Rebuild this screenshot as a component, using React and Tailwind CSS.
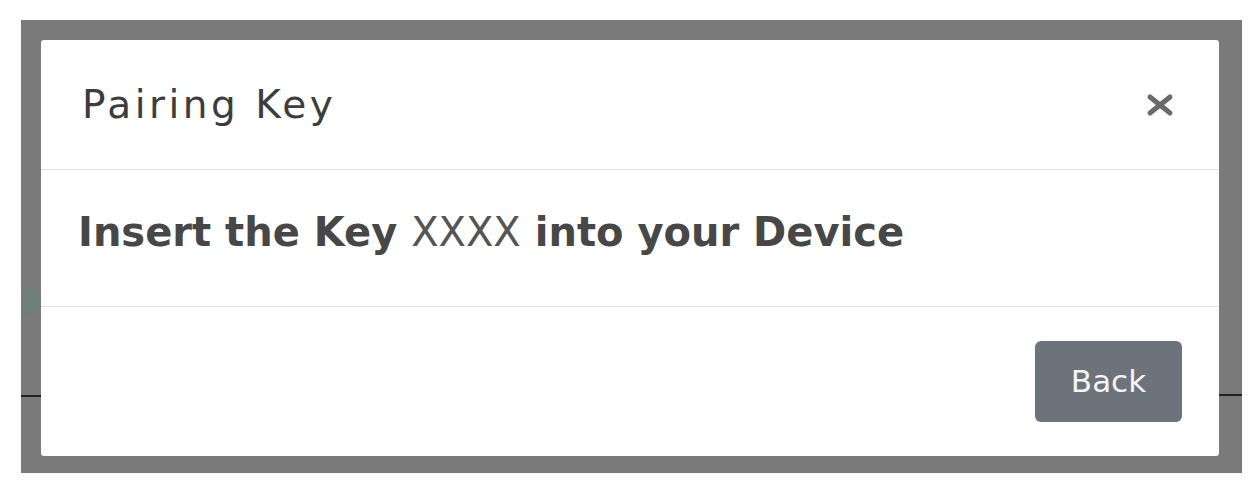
export default function App() {
  return (
    <div className="w-[1260px] h-[488px] bg-white pt-[20px] pl-[21px] pr-[18px] pb-[15px]" style={{ fontFamily: '"DejaVu Sans", "Open Sans", sans-serif' }}>
      <div className="relative h-full bg-[#7a7a7a] pt-[20px] pl-[20px] pr-[23px] pb-[17px]">
        <div className="absolute left-0 top-[375px] w-[20px] h-[2px] bg-[#222]" />
        <div className="absolute right-0 top-[374px] w-[23px] h-[2px] bg-[#222]" />
        <div className="absolute left-[2px] top-[270px] w-[16px] h-[24px] bg-[#6d7f78]" />
        <div className="relative h-full bg-white rounded-[3px] flex flex-col">
          <div className="h-[130px] flex items-center justify-between pl-[41px] pr-[44px] border-b border-[#e3e3e3]">
            <div className="text-[39px] text-[#3d3d3d] leading-none tracking-[3.5px]">Pairing Key</div>
            <div className="w-[30px] h-[26px] flex items-center justify-center">
              <svg width="28" height="24" viewBox="0 0 28 24">
                <path d="M4 4 L24 20 M24 4 L4 20" stroke="#6a6a6a" strokeWidth="5" strokeLinecap="round" />
              </svg>
            </div>
          </div>
          <div className="h-[137px] flex items-center pl-[37px] pb-[12px] border-b border-[#e3e3e3]">
            <div className="text-[40px] text-[#474747] font-bold leading-none">
              Insert the Key <span className="font-normal text-[#555]">XXXX</span> into your Device
            </div>
          </div>
          <div className="flex-1 flex items-start justify-end pt-[34px] pr-[37px]">
            <button className="w-[147px] h-[81px] rounded-[6px] bg-[#6c737a] text-[#f4f4f4] text-[31px] leading-none flex items-center justify-center">
              Back
            </button>
          </div>
        </div>
      </div>
    </div>
  );
}
